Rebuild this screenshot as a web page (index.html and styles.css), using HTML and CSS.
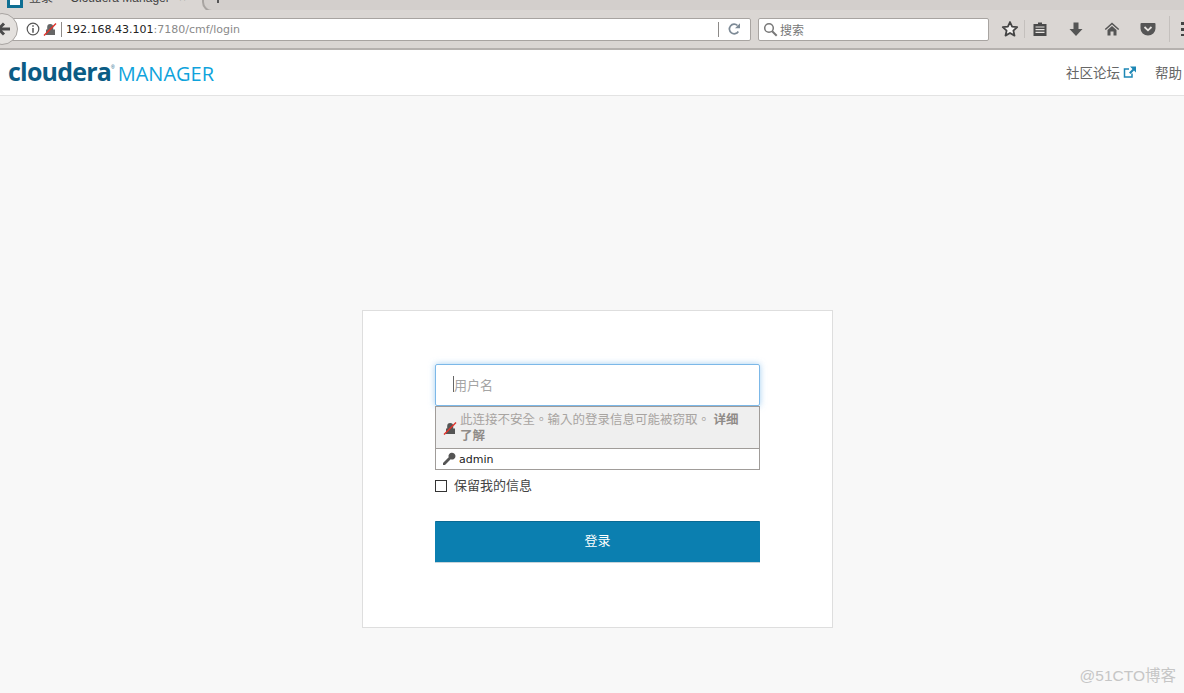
FILE: index.html
```html
<!DOCTYPE html>
<html lang="zh-CN">
<head>
    <meta charset="UTF-8">
    <meta name="viewport" content="width=device-width, initial-scale=1.0">
    <title>登录 - Cloudera Manager</title>
    <link rel="stylesheet" href="styles.css">
</head>
<body>

    <!-- 浏览器外壳 -->
    <div class="browser">
        <div class="tab-strip">
            <div class="tab">
                <span class="favicon"></span>
                <span class="tab-title">登录 -&nbsp;&nbsp;&nbsp;Cloudera Manager</span>
                <span class="tab-close">×</span>
            </div>
            <div class="new-tab"><span class="new-tab-plus"></span></div>
        </div>
        <div class="toolbar">
            <button class="back-btn" aria-label="back">
                <svg width="14" height="14" viewBox="0 0 14 14"><path d="M7 1.500 1.500 7 7 12.500M2 7h11" fill="none" stroke="#4a4a4a" stroke-width="3"/></svg>
            </button>
            <div class="url-bar">
                <svg class="url-icon" width="14" height="14" viewBox="0 0 14 14"><circle cx="7" cy="7" r="5.800" fill="none" stroke="#555" stroke-width="1.200"/><path d="M7 3.200v1.600M7 6v4.800" stroke="#555" stroke-width="1.500"/></svg>
                <svg class="url-icon" width="14" height="14" viewBox="0 0 14 14"><path d="M3 13V7.500h1.200V5a3 3 0 0 1 6 0v2.500H12V13z" fill="#666"/><path d="M1 13.500 13 1.500" stroke="#e0342c" stroke-width="1.500"/></svg>
                <span class="url-divider"></span>
                <span class="url-text"><span class="url-host">192.168.43.101</span>:7180/cmf/login</span>
                <span class="url-divider url-divider-end"></span>
                <svg class="reload" width="14" height="14" viewBox="0 0 14 14"><path d="M11.300 9.500A4.800 4.800 0 1 1 10.500 3.500" fill="none" stroke="#7d8a96" stroke-width="1.700"/><path d="M8 6.300h5V1.300z" fill="#7d8a96"/></svg>
            </div>
            <div class="search-bar">
                <svg width="15" height="15" viewBox="0 0 15 15"><circle cx="6" cy="6" r="4.300" fill="none" stroke="#777" stroke-width="1.500"/><path d="m9.200 9.200 4.500 4.500" stroke="#777" stroke-width="2"/></svg>
                <span>搜索</span>
            </div>
            <div class="tool-icons">
                <svg class="tool star" width="18" height="18" viewBox="0 0 18 18"><path d="m9 2 2.100 4.700 5.100.5-3.800 3.400 1.100 5L9 13l-4.500 2.600 1.100-5-3.800-3.400 5.100-.5z" fill="#f3f1ef" stroke="#444" stroke-width="1.800" stroke-linejoin="round"/></svg>
                <span class="tool-sep"></span>
                <svg class="tool reading" width="16" height="16" viewBox="0 0 16 16"><path d="M1.500 3h4.500V1.500h4V3h4.500v12H1.500z" fill="#4a4a4a"/><path d="M3.500 6h9M3.500 8.700h9M3.500 11.400h9" stroke="#e6e3e0" stroke-width="1.200"/></svg>
                <svg class="tool down" width="16" height="16" viewBox="0 0 16 16"><path d="M5.500 1.500h5v6.500h4L8 15 1.500 8h4z" fill="#555"/></svg>
                <svg class="tool home" width="16" height="16" viewBox="0 0 16 16"><path d="M8 1.500 0.800 8l1 1L8 3.500 14.200 9l1-1z" fill="#555"/><path d="M3.500 9 8 5l4.500 4v5.500H9.500v-4h-3v4h-3z" fill="#555"/></svg>
                <svg class="tool pocket" width="16" height="16" viewBox="0 0 16 16"><path d="M1.500 2h13a1 1 0 0 1 1 1v4.500a7.500 7 0 0 1-15 0V3a1 1 0 0 1 1-1z" fill="#555"/><path d="m4.500 6 3.500 3.300L11.500 6" fill="none" stroke="#e6e3e0" stroke-width="1.800"/></svg>
                <span class="tool-sep tool-sep-end"></span>
                <span class="menu-bars"></span>
            </div>
        </div>
    </div>

    <!-- 页头 -->
    <header class="page-header">
        <div class="logo">
            <span class="logo-name">cloudera</span><span class="logo-reg">®</span><span class="logo-product">MANAGER</span>
        </div>
        <nav class="header-links">
            <a class="header-link">社区论坛
                <svg width="14" height="14" viewBox="0 0 14 14"><path d="M9 8.500V12H1.500V4H6" fill="none" stroke="#1d87b5" stroke-width="1.500"/><path d="M7 1.500h6v6l-2-2-3.500 3.500-1.500-1.500L9.500 4z" fill="#1d87b5"/></svg>
            </a>
            <a class="header-link">帮助</a>
        </nav>
    </header>

    <!-- 登录卡片 -->
    <main class="page-main">
        <form class="login-card">
            <div class="input-box"><span class="caret"></span><span class="placeholder">用户名</span></div>
            <div class="autocomplete">
                <div class="ac-warning">
                    <svg width="14" height="14" viewBox="0 0 14 14"><path d="M3 13V7.500h1.200V5a3 3 0 0 1 6 0v2.500H12V13z" fill="#555"/><path d="M1 13.500 13 1.500" stroke="#e0342c" stroke-width="1.500"/></svg>
                    <p lang="zh-TW">此连接不安全。输入的登录信息可能被窃取。 <strong>详细了解</strong></p>
                </div>
                <div class="ac-item">
                    <svg width="14" height="14" viewBox="0 0 14 14"><path d="M13.500 4a3.500 3.500 0 0 1-4.800 3.300L3 13H1v-2l5.700-5.700A3.500 3.500 0 1 1 13.500 4z" fill="#555"/></svg>
                    <span>admin</span>
                </div>
            </div>
            <label class="remember"><span class="checkbox"></span>保留我的信息</label>
            <button class="login-btn" type="button">登录</button>
        </form>
    </main>

    <div class="watermark">@51CTO博客</div>

</body>
</html>
```

FILE: styles.css
```css
/* --- 基础 --- */
:root {
    --color-chrome: #dad6d3;
    --color-chrome-line: #a8a4a1;
    --color-page: #f8f8f8;
    --color-primary: #0b7fb0;
    --color-text: #666666;
}

html, body {
    height: 693px;
    overflow: hidden;
}

body {
    margin: 0;
    background-color: var(--color-page);
    font-family: "Liberation Sans", "Noto Sans CJK SC", sans-serif;
    color: var(--color-text);
    position: relative;
}

/* --- 浏览器外壳 --- */
.browser {
    background-color: var(--color-chrome);
    height: 50px;
}

.tab-strip {
    height: 10px;
    display: flex;
    overflow: hidden;
}

.tab {
    width: 202px;
    height: 10px;
    display: flex;
    align-items: center;
    flex-shrink: 0;
    padding-left: 7px;
    box-sizing: border-box;
    font-size: 12px;
    color: #444;
}

.favicon {
    width: 16px;
    height: 16px;
    margin-top: -11px;
    box-sizing: border-box;
    background: #fff;
    border: 3px solid #0f6f93;
    flex-shrink: 0;
}

.tab-title {
    margin: -18px 0 0 6px;
    white-space: nowrap;
    width: 147px;
}

.tab-close {
    margin: -14px 0 0 3px;
    color: #777;
}

.new-tab {
    flex: 1;
    height: 10px;
    position: relative;
}

.new-tab::before {
    content: "";
    position: absolute;
    left: 0;
    right: 0;
    top: -20px;
    height: 28px;
    border: 2px solid var(--color-chrome-line);
    border-right: 0;
    border-bottom-left-radius: 10px;
    background: #d3cfcc;
}

.new-tab-plus {
    position: absolute;
    left: 15px;
    top: 0;
    width: 2px;
    height: 3px;
    background: #555;
}

.toolbar {
    height: 40px;
    display: flex;
    align-items: center;
    box-sizing: border-box;
    padding-bottom: 1px;
    border-bottom: 2px solid #b5b1ae;
    position: relative;
}

.back-btn {
    width: 32px;
    height: 32px;
    margin-left: -14px;
    margin-right: -10px;
    padding: 0 0 0 10px;
    border: 1px solid #a8a4a1;
    border-radius: 50%;
    background: #e4e1de;
    display: flex;
    align-items: center;
    position: relative;
    z-index: 1;
    flex-shrink: 0;
}

.url-bar {
    width: 743px;
    height: 23px;
    margin-top: 1px;
    display: flex;
    align-items: center;
    box-sizing: border-box;
    padding-left: 17px;
    background: #fff;
    border: 1px solid #a8a4a1;
    border-radius: 2px;
    flex-shrink: 0;
}

.url-icon {
    margin-right: 3px;
    flex-shrink: 0;
}

.url-divider {
    width: 1px;
    height: 15px;
    margin: 0 4px 0 1px;
    background: #8d8a88;
}

.url-text {
    font-family: "DejaVu Sans", sans-serif;
    font-size: 11px;
    color: #8a8a8a;
    white-space: nowrap;
    flex: 1;
}

.url-host {
    color: #222;
}

.url-divider-end {
    margin: 0 8px 0 0;
}

.reload {
    margin-right: 9px;
}

.search-bar {
    width: 231px;
    height: 23px;
    margin: 1px 0 0 7px;
    display: flex;
    align-items: center;
    gap: 2px;
    box-sizing: border-box;
    padding-left: 4px;
    background: #fff;
    border: 1px solid #a8a4a1;
    border-radius: 2px;
    font-size: 12px;
    color: #777;
    flex-shrink: 0;
}

.tool-icons {
    display: flex;
    align-items: center;
    margin-left: 12px;
    flex-shrink: 0;
}

.tool {
    flex-shrink: 0;
}

.tool-sep {
    width: 1px;
    height: 18px;
    margin: 0 7px 0 5px;
    background: #c4c0bd;
}

.reading, .down, .home {
    margin-right: 20px;
}

.tool-sep-end {
    margin: 0 11px 0 13px;
    height: 26px;
}

.menu-bars {
    width: 3px;
    height: 14px;
    background: repeating-linear-gradient(#444 0 3px, transparent 3px 6px);
}

/* --- 页头 --- */
.page-header {
    height: 46px;
    display: flex;
    justify-content: space-between;
    align-items: center;
    box-sizing: border-box;
    padding: 0 2px 0 8px;
    background: #fff;
    border-bottom: 1px solid #e3e3e3;
}

.logo {
    display: flex;
    align-items: baseline;
    white-space: nowrap;
    padding-bottom: 4px;
}

.logo-name {
    font-family: "Open Sans", sans-serif;
    font-weight: 700;
    font-size: 25px;
    letter-spacing: -0.8px;
    color: #0b5c85;
}

.logo-reg {
    font-size: 5px;
    color: #0b5c85;
    align-self: flex-start;
    margin-top: 10px;
}

.logo-product {
    font-family: "Open Sans", sans-serif;
    font-size: 20px;
    margin-left: 3px;
    color: #0fa3dc;
}

.header-links {
    display: flex;
    gap: 18px;
    padding-bottom: 2px;
}

.header-link {
    display: flex;
    align-items: center;
    gap: 3px;
    font-size: 13.500px;
    color: #666;
}

/* --- 登录卡片 --- */
.page-main {
    padding-top: 214px;
}

.login-card {
    width: 471px;
    height: 318px;
    margin-left: 362px;
    box-sizing: border-box;
    padding: 53px 72px 0;
    background: #fff;
    border: 1px solid #dedede;
    display: flex;
    flex-direction: column;
}

.input-box {
    height: 42px;
    width: 325px;
    display: flex;
    align-items: center;
    box-sizing: border-box;
    padding: 0 0 2px 17px;
    border: 1px solid #7cb8e8;
    border-radius: 2px;
    box-shadow: 0 0 6px rgba(102, 175, 233, 0.6);
}

.caret {
    width: 1px;
    height: 16px;
    background: #666;
}

.placeholder {
    font-size: 13px;
    color: #a5a5a5;
}

.autocomplete {
    width: 325px;
    box-sizing: border-box;
    border: 1px solid #a09c99;
}

.ac-warning {
    height: 41px;
    display: flex;
    align-items: center;
    gap: 3px;
    padding-left: 7px;
    background: #efefef;
    border-bottom: 1px solid #a09c99;
}

.ac-warning p {
    margin: 0;
    width: 285px;
    font-family: "Liberation Sans", "Noto Sans CJK TC", sans-serif;
    font-size: 12.500px;
    line-height: 16px;
    color: #a8a4a1;
}

.ac-warning strong {
    color: #8f8b88;
}

.ac-item {
    height: 20px;
    display: flex;
    align-items: center;
    gap: 3px;
    padding-left: 6px;
    font-family: "DejaVu Sans", sans-serif;
    font-size: 11px;
    color: #222;
    background: #fff;
}

.remember {
    display: flex;
    align-items: center;
    gap: 7px;
    margin-top: 7px;
    font-size: 13px;
    line-height: 17px;
    color: #444;
}

.checkbox {
    width: 12px;
    height: 12px;
    box-sizing: border-box;
    border: 1px solid #333;
    background: #fff;
}

.login-btn {
    width: 325px;
    height: 42px;
    margin-top: 27px;
    padding: 0 0 5px;
    border: 0;
    border-top: 1px solid #0a6a94;
    border-bottom: 1px solid #c8d4da;
    border-radius: 1px;
    background: var(--color-primary);
    color: #fff;
    font-family: inherit;
    font-size: 13px;
}

/* --- 水印 --- */
.watermark {
    position: absolute;
    right: 8px;
    bottom: 8px;
    font-size: 15.500px;
    color: #c6c6c6;
}
```
